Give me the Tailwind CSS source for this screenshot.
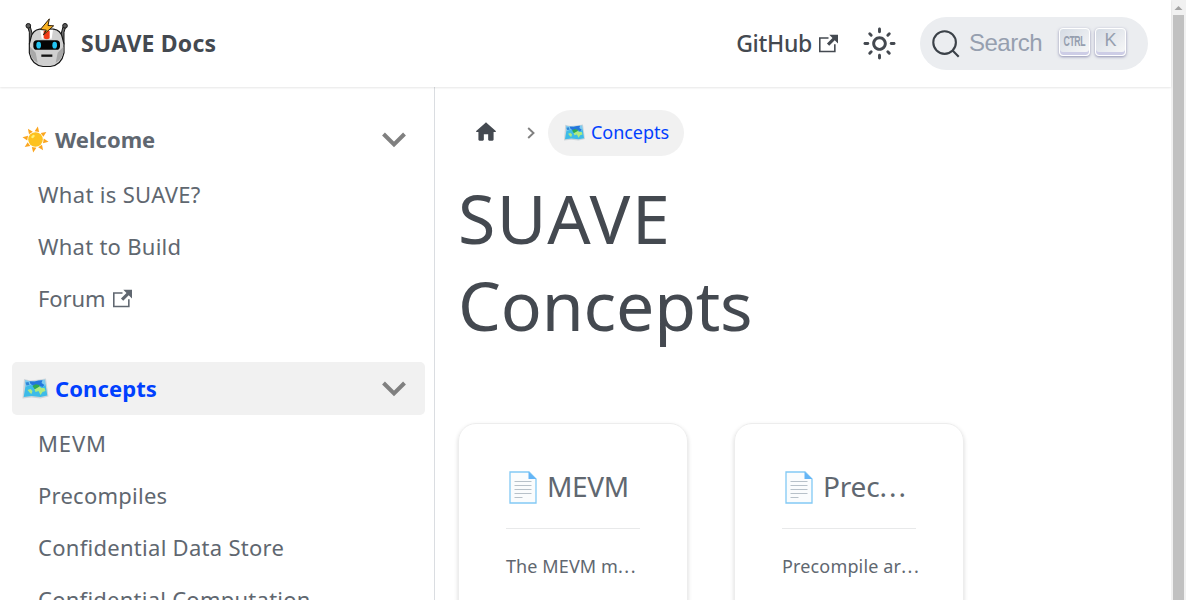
<!DOCTYPE html>
<html lang="en">
<head>
<meta charset="utf-8">
<title>SUAVE Docs</title>
<script src="https://cdn.jsdelivr.net/npm/@tailwindcss/browser@4"></script>
</head>
<body class="h-[600px] w-[1186px] overflow-hidden bg-white font-['Noto_Sans',sans-serif] text-[#444950]">
<svg class="hidden">
  <symbol id="map" viewBox="0 0 26 21">
    <path d="M1.500 1 8 2.500 17 1.500 23.500 .5 26 18.500 18 20.500 9 19.500 0 20.500Z" fill="#cdd4d9"/>
    <path d="M3 8 9 6 17 7 23 6 24.800 17.500 18 19 9 18 1.200 19Z" fill="#3dbbe8"/>
    <path d="M2.500 2 8.500 3.500 17 2.500 22.500 1.500 23.300 7 20 9 16 7 12 8 8 7 2.800 9Z" fill="#7ccbf0"/>
    <path d="M7 3.200 12 3.500 16 2.500 20 2.200 19 5 22 7 20 9 15 7 11 8 8 6Z" fill="#2476dc"/>
    <path d="M3 4.500 6 4 7 7 4 7.500Z" fill="#2f86d8"/>
    <path d="M10 8 13 6.200 17 7 17 11 12 11Z" fill="#2faa50"/>
    <path d="M5 12 8 11 10 13 9 16 7.500 15ZM12 11.500 17 8.500 19 10 22 10 23 13 20 14 18 17 16 13 13 14Z" fill="#aeea80"/>
  </symbol>
  <symbol id="ext" viewBox="0 0 24 24"><path fill="currentColor" d="M21 13v10h-21v-19h12v2h-10v15h17v-8h2zm3-12h-10.988l4.035 4-6.977 7.070 2.828 2.828 6.977-7.070 4.125 4.172v-11z"/></symbol>
  <symbol id="doc" viewBox="0 0 28 33">
    <path d="M1 1H20L27 8V32H1Z" fill="#fafcfd" stroke="#82c9f5" stroke-width="1.300"/>
    <path d="M19.500 .8 27.300 8H19.500Z" fill="#64b5f6"/>
    <path d="M5.500 10.500h17M5.500 14.500h17M5.500 18.500h17M5.500 22.500h17M5.500 26.500h8" stroke="#b7c1c9" stroke-width="1.100"/>
  </symbol>
  <symbol id="chev" viewBox="0 0 24 16"><path d="M1.500 2 12 12.500 22.500 2" fill="none" stroke="#808080" stroke-width="4"/></symbol>
</svg>
<div class="flex h-full">
  <div class="flex h-full w-[1171px] flex-col">
    <header class="relative z-10 flex h-[87px] shrink-0 items-center bg-white pl-6 shadow-[0_1px_2px_0_rgba(0,0,0,0.1)]">
      <svg class="mb-0.5 h-[50px] w-[46px] shrink-0" viewBox="27 19.500 138 150">
        <path d="M38 46 43 62V98L54 110V76L46 46ZM152 46 147 62V98L136 110V76L144 46Z" fill="#6e6e6e" stroke="#151515" stroke-width="3"/>
        <circle cx="40" cy="43" r="7" fill="#5c5c5c" stroke="#151515" stroke-width="3"/><circle cx="150" cy="43" r="7" fill="#5c5c5c" stroke="#151515" stroke-width="3"/>
        <path d="M74 53H116Q137 56 142 78L147 98V124Q140 160 106 165H84Q50 160 43 124V98L48 78Q53 56 74 53Z" fill="#d0d0d0" stroke="#151515" stroke-width="3.500"/>
        <path d="M45 106 62 124 68 154Q48 142 45 122ZM145 106 128 124 122 154Q142 142 145 122Z" fill="#a8a8a8"/>
        <path d="M76 55H114L110 82H80Z" fill="#fff"/><path d="M86 58H104V80Q95 86 86 80Z" fill="#f03a17"/>
        <rect x="55" y="86" width="80" height="29" rx="11" fill="#050505"/>
        <ellipse cx="71" cy="101" rx="7" ry="10" fill="#23c4f2"/><ellipse cx="119" cy="101" rx="7" ry="10" fill="#23c4f2"/>
        <path d="M79 132.500H112" stroke="#151515" stroke-width="7"/>
        <path d="M103 22 76 54 94 56 85 70 116 43 99 42Z" fill="#fbb320" stroke="#2b1d0c" stroke-width="3" stroke-linejoin="round"/>
      </svg>
      <b class="ml-[11px] w-[180px] whitespace-nowrap text-[23px] tracking-[0.2px]">SUAVE Docs</b>
      <div class="ml-auto flex items-center">
        <span class="whitespace-nowrap text-[23px] font-medium tracking-[-0.3px]">GitHub</span>
        <svg class="mb-px ml-[7px] h-[19px] w-[19px]"><use href="#ext"/></svg>
        <svg class="ml-[24px] h-[35px] w-[35px]" viewBox="0 0 24 24"><path fill="currentColor" d="M12,9c1.650,0,3,1.350,3,3s-1.350,3-3,3s-3-1.350-3-3S10.350,9,12,9 M12,7c-2.760,0-5,2.240-5,5s2.240,5,5,5s5-2.240,5-5 S14.760,7,12,7L12,7z M2,13l2,0c0.550,0,1-0.450,1-1s-0.450-1-1-1l-2,0c-0.550,0-1,0.450-1,1S1.450,13,2,13z M20,13l2,0c0.550,0,1-0.450,1-1 s-0.450-1-1-1l-2,0c-0.550,0-1,0.450-1,1S19.450,13,20,13z M11,2v2c0,0.550,0.450,1,1,1s1-0.450,1-1V2c0-0.550-0.450-1-1-1S11,1.450,11,2z M11,20v2c0,0.550,0.450,1,1,1s1-0.450,1-1v-2c0-0.550-0.450-1-1-1S11,19.450,11,20z"/><path d="m5.300 5.300 1 1M17.700 17.700l1 1M5.300 18.700l1-1M17.700 6.300l1-1" stroke="currentColor" stroke-width="2" stroke-linecap="round"/></svg>
        <div class="mr-[23px] ml-[23px] flex h-[53px] w-[228px] items-center rounded-full bg-[#ebedf0] pl-[11px]">
          <svg class="h-[30px] w-[30px]" viewBox="0 0 20 20"><path d="M14.386 14.386l4.088 4.088-4.088-4.088c-2.942 2.942-7.711 2.942-10.653 0s-2.942-7.711 0-10.653 7.711-2.942 10.653 0 2.942 7.711 0 10.653z" stroke="#3b4148" fill="none" stroke-width="1.400"/></svg>
          <span class="mb-0.5 ml-2 w-[90px] shrink-0 font-['Liberation_Sans',Arial,sans-serif] text-[24px] tracking-[-0.5px] text-[#969faf]">Search</span>
          <span class="mb-[3px] flex h-[28px] w-[31px] shrink-0 items-center justify-center rounded-[4px] border border-white bg-linear-to-br from-[#d5dbe4] to-[#f8f8f8] shadow-[inset_0_-3px_0_0_#cdcde6,0_1px_3px_0_rgba(80,80,135,0.6)]">
            <svg class="mb-[3px] h-4 w-[23px]" viewBox="0 0 23 16"><text transform="scale(.58 1)" x="0.900" y="13.500" font-family="Liberation Sans, sans-serif" font-weight="bold" font-size="15" textLength="38" fill="#969faf">CTRL</text></svg>
          </span>
          <span class="mb-[3px] ml-[5px] flex h-[28px] w-[31px] shrink-0 items-center justify-center rounded-[4px] border border-white bg-linear-to-br from-[#d5dbe4] to-[#f8f8f8] pb-[3px] font-['Liberation_Sans',Arial,sans-serif] text-[18px] text-[#969faf] shadow-[inset_0_-3px_0_0_#cdcde6,0_1px_3px_0_rgba(80,80,135,0.6)]">K</span>
        </div>
      </div>
    </header>
    <div class="flex min-h-0 flex-1">
      <nav class="w-[435px] shrink-0 overflow-hidden border-r border-[#dadde1] pt-[26px] pr-[9px] pl-3 text-[22px] text-[#606770]">
        <div class="flex h-[53px] items-center rounded-[5px] pr-[19.500px] pl-[9.500px]">
          <svg class="h-[27px] w-[27px]" viewBox="0 0 27 27">
            <g fill="#fba51f" transform="rotate(10 13.500 13.500)"><path id="ray" d="M11.200 5.500 13.500 .3 15.800 5.500Z"/><use href="#ray" transform="rotate(45 13.500 13.500)"/><use href="#ray" transform="rotate(90 13.500 13.500)"/><use href="#ray" transform="rotate(135 13.500 13.500)"/><use href="#ray" transform="rotate(180 13.500 13.500)"/><use href="#ray" transform="rotate(225 13.500 13.500)"/><use href="#ray" transform="rotate(270 13.500 13.500)"/><use href="#ray" transform="rotate(315 13.500 13.500)"/></g>
            <circle cx="13.500" cy="13.500" r="7.300" fill="#fdc21f"/><ellipse cx="11" cy="10.500" rx="2" ry="1.200" transform="rotate(-40 11 10.500)" fill="#fff176"/>
          </svg>
          <b class="ml-[6.500px] pb-px">Welcome</b><svg class="ml-auto h-4 w-6"><use href="#chev"/></svg>
        </div>
        <div class="flex flex-col pt-[2px] pb-px pl-[26px]">
          <div class="flex h-[52px] items-center"><span class="tracking-[0.33px]">What is SUAVE?</span></div>
          <div class="flex h-[52px] items-center"><span class="tracking-[0.27px]">What to Build</span></div>
          <div class="flex h-[52px] items-center"><span class="tracking-[-0.1px]">Forum</span><svg class="ml-[8px] h-[19px] w-[19px]"><use href="#ext"/></svg></div>
        </div>
        <div class="mt-[37px] flex h-[53px] items-center rounded-[5px] bg-[#f1f1f1] pr-[19.500px] pl-[9.500px] text-[#0040ff]">
          <svg class="h-[21px] w-[27px]"><use href="#map"/></svg>
          <b class="ml-[6.500px] pb-px tracking-[0.1px]">Concepts</b><svg class="ml-auto h-4 w-6"><use href="#chev"/></svg>
        </div>
        <div class="flex flex-col pt-[2px] pl-[26px]">
          <div class="flex h-[52px] items-center"><span class="tracking-[0.9px]">MEVM</span></div>
          <div class="flex h-[52px] items-center"><span class="tracking-[0.25px]">Precompiles</span></div>
          <div class="flex h-[52px] items-center"><span class="tracking-[0.28px]">Confidential Data Store</span></div>
          <div class="flex h-[52px] items-center"><span class="tracking-[0.25px]">Confidential Computation</span></div>
        </div>
      </nav>
      <main class="min-w-0 flex-1 overflow-hidden pt-[23px] pl-[23px]">
        <div class="flex h-[46px] items-center">
          <svg class="mb-[3px] ml-[15px] h-[26px] w-[26px]" viewBox="0 0 24 24"><path fill="currentColor" d="M10 19v-5h4v5c0 .55.45 1 1 1h3c.55 0 1-.45 1-1v-7h1.700c.46 0 .68-.57.33-.87L12.670 3.600c-.38-.34-.96-.34-1.340 0l-8.360 7.530c-.34.3-.13.87.33.87H5v7c0 .55.45 1 1 1h3c.55 0 1-.45 1-1z"/></svg>
          <svg class="ml-[28px] h-3 w-2" viewBox="0 0 8 12"><path d="M1.200 1 6.500 6 1.200 11" fill="none" stroke="#808080" stroke-width="1.900"/></svg>
          <div class="ml-[13px] flex h-[46px] w-[136px] items-center rounded-full bg-[#f1f1f1] pl-4 text-[18px] text-[#0040ff]">
            <svg class="mb-px h-[17px] w-[21px]"><use href="#map"/></svg><span class="ml-[6px] pb-0.5 tracking-[-0.05px]">Concepts</span>
          </div>
        </div>
        <h1 class="mt-[18px] w-[320px] text-[68px] leading-[87px]"><span class="tracking-[1.500px]">SUAVE</span><br><span class="tracking-[-0.2px]">Concepts</span></h1>
        <div class="mt-[75px] flex gap-[46px] text-[#606770]">
          <div class="h-[300px] w-[230px] rounded-[18px] border border-[#ededed] px-[47px] pt-[36px] shadow-[0_2px_4px_0_rgba(0,0,0,0.15)]">
            <div class="flex h-[54px] items-center"><svg class="ml-[3px] h-[33px] w-[28px]"><use href="#doc"/></svg><span class="ml-[10px] pb-0.5 whitespace-nowrap text-[28px] tracking-[-0.3px]">MEVM</span></div>
            <div class="mt-[14px] h-px w-[134px] bg-[#e8e9ea]"></div>
            <p class="mt-[24px] whitespace-nowrap text-[18px] tracking-[0.1px]">The MEVM m<span class="tracking-[1.600px]">...</span></p>
          </div>
          <div class="h-[300px] w-[230px] rounded-[18px] border border-[#ededed] px-[47px] pt-[36px] shadow-[0_2px_4px_0_rgba(0,0,0,0.15)]">
            <div class="flex h-[54px] items-center"><svg class="ml-[3px] h-[33px] w-[28px]"><use href="#doc"/></svg><span class="ml-[10px] pb-0.5 whitespace-nowrap text-[28px] tracking-[-0.2px]">Prec<span class="tracking-[2px]">...</span></span></div>
            <div class="mt-[14px] h-px w-[134px] bg-[#e8e9ea]"></div>
            <p class="mt-[24px] whitespace-nowrap text-[18px] tracking-[0.15px]">Precompile ar<span class="tracking-[1.600px]">...</span></p>
          </div>
        </div>
      </main>
    </div>
  </div>
  <div class="flex h-full w-[15px] flex-col items-center bg-[#f1f1f1]">
    <svg class="h-[15px] w-[15px] shrink-0" viewBox="0 0 15 15"><path d="M3.500 10 7.500 6 11.500 10Z" fill="#a3a3a3"/></svg>
    <div class="w-[11px] flex-1 bg-[#c1c1c1]"></div>
  </div>
</div>
</body>
</html>
